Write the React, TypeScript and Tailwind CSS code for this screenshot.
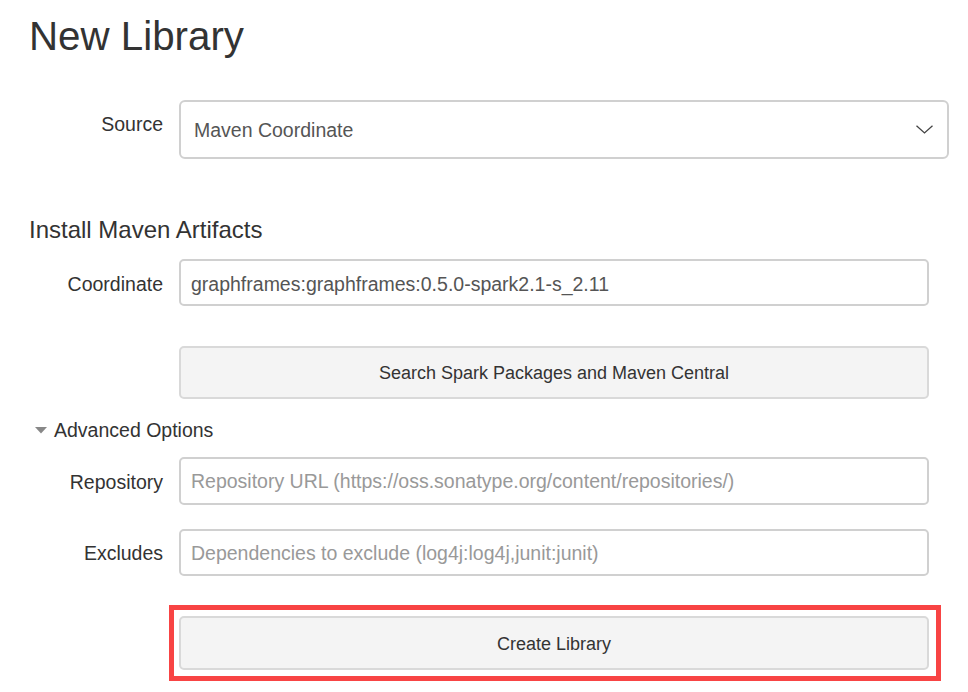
import React from "react";

export default function App() {
  const font = { fontFamily: '"Liberation Sans", Arial, Helvetica, sans-serif' };
  return (
    <div
      className="w-[968px] h-[692px] bg-white overflow-hidden text-[#333]"
      style={font}
    >
      <h1 className="ml-[29px] mt-[15px] text-[40.3px] leading-[44px] font-normal text-[#333]">
        New Library
      </h1>

      {/* Source */}
      <div className="flex mt-[41px]">
        <div className="w-[163px] text-right text-[19.5px] leading-[22px] pt-[13px] text-[#333]">
          Source
        </div>
        <div className="ml-[16px] w-[770px] h-[59px] border-2 border-[#d0d0d0] rounded-[6px] flex items-center pl-[13px] pr-[13px] justify-between">
          <span className="text-[19.5px] leading-[22px] text-[#555]">Maven Coordinate</span>
          <svg width="17" height="9" viewBox="0 0 17 9" className="mr-[1px]">
            <path d="M0.5 0.8 L8.5 8 L16.5 0.8" fill="none" stroke="#444" strokeWidth="1.3" />
          </svg>
        </div>
      </div>

      <h4 className="ml-[29px] mt-[57px] text-[24px] leading-[28px] font-normal text-[#333]">
        Install Maven Artifacts
      </h4>

      {/* Coordinate */}
      <div className="flex items-center mt-[15px]">
        <div className="w-[163px] text-right text-[19.5px] leading-[22px] pt-[2px] text-[#333]">
          Coordinate
        </div>
        <div className="ml-[16px] w-[750px] h-[47px] border-2 border-[#d0d0d0] rounded-[5px] flex items-center px-[10px]">
          <span className="text-[19.5px] leading-[22px] pt-[2px] text-[#555]">
            graphframes:graphframes:0.5.0-spark2.1-s_2.11
          </span>
        </div>
      </div>

      {/* Search button */}
      <div className="mt-[40px] ml-[179px] w-[750px] h-[53px] bg-[#f4f4f4] border-2 border-[#d9d9d9] rounded-[5px] flex items-center justify-center">
        <span className="text-[18px] leading-[22px] text-[#333] pt-[1px]">
          Search Spark Packages and Maven Central
        </span>
      </div>

      {/* Advanced options */}
      <div className="flex items-center mt-[20px] ml-[35px] h-[22px]">
        <svg width="12" height="7" viewBox="0 0 12 7">
          <path d="M0 0 L12 0 L6 6.5 Z" fill="#888" />
        </svg>
        <span className="ml-[7px] text-[19.5px] leading-[22px] text-[#333]">Advanced Options</span>
      </div>

      {/* Repository */}
      <div className="flex items-center mt-[16px]">
        <div className="w-[163px] text-right text-[19.5px] leading-[22px] pt-[1px] text-[#333]">
          Repository
        </div>
        <div className="ml-[16px] w-[750px] h-[48px] border-2 border-[#d0d0d0] rounded-[5px] flex items-center px-[10px]">
          <span className="text-[19.5px] leading-[22px] text-[#999]">
            Repository URL (https://oss.sonatype.org/content/repositories/)
          </span>
        </div>
      </div>

      {/* Excludes */}
      <div className="flex items-center mt-[24px]">
        <div className="w-[163px] text-right text-[19.5px] leading-[22px] pt-[1px] text-[#333]">
          Excludes
        </div>
        <div className="ml-[16px] w-[750px] h-[47px] border-2 border-[#d0d0d0] rounded-[5px] flex items-center px-[10px]">
          <span className="text-[19.5px] leading-[22px] text-[#999]">
            Dependencies to exclude (log4j:log4j,junit:junit)
          </span>
        </div>
      </div>

      {/* Create library highlighted */}
      <div className="mt-[29px] ml-[169px] w-[772px] border-[5px] border-[#f84444] pt-[6px] pb-[6px] pl-[5px]">
        <div className="w-[750px] h-[54px] bg-[#f4f4f4] border-2 border-[#d9d9d9] rounded-[5px] flex items-center justify-center">
          <span className="text-[18px] leading-[22px] text-[#333] pt-[1px]">Create Library</span>
        </div>
      </div>
    </div>
  );
}
